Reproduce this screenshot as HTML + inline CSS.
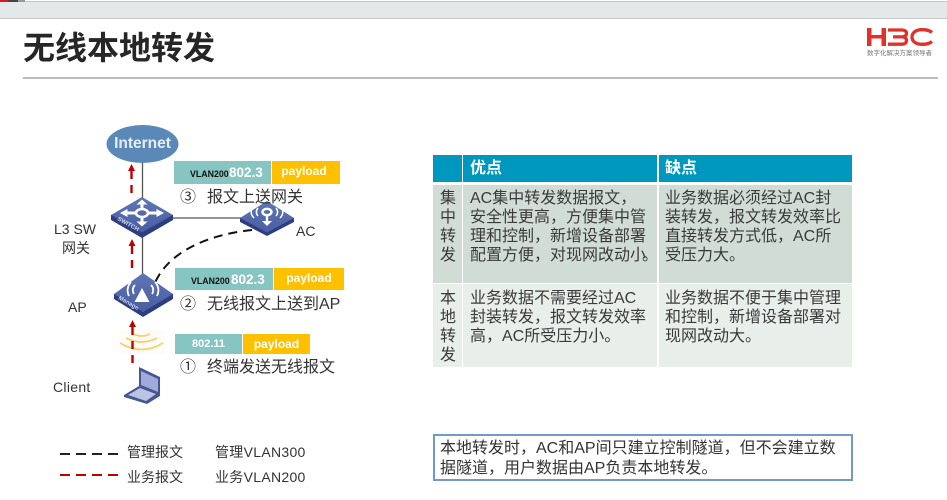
<!DOCTYPE html>
<html lang="zh">
<head>
<meta charset="utf-8">
<style>
html,body{margin:0;padding:0;background:#fff}
#p{position:relative;width:947px;height:500px;overflow:hidden;background:#fff;font-family:"Liberation Sans","Noto Sans CJK SC",sans-serif;color:#333}
.a{position:absolute;white-space:nowrap}
.t{font-size:16px;line-height:19px;color:#3a3a3a}
.l{font-size:14px;line-height:20px;color:#333}
.s{font-size:16px;line-height:20px;color:#333}
.b{position:absolute;box-sizing:border-box}
.w{color:#fff;font-weight:bold;text-align:center}
.n{margin-left:-4px}
</style>
</head>
<body>
<div id="p">
<!-- top strip -->
<div class="b" style="left:0;top:0;width:947px;height:2px;background:#c4c4c4"></div>
<div class="b" style="left:0;top:0;width:8px;height:2px;background:#e0141e"></div>
<div class="b" style="left:8px;top:0;width:10px;height:2px;background:#444"></div>
<div class="b" style="left:18px;top:0;width:7px;height:2px;background:#999"></div>
<div class="b" style="left:25px;top:0;width:922px;height:1px;background:#fff"></div>
<div class="b" style="left:0;top:2px;width:947px;height:16px;background:#e3e8ea"></div>
<div class="b" style="left:0;top:18px;width:947px;height:1px;background:#c8c8c8"></div>

<!-- title -->
<div class="a" style="left:23px;top:29px;font-size:32px;line-height:38px;font-weight:bold;color:#262626">无线本地转发</div>
<div class="b" style="left:23px;top:77px;width:915px;height:2px;background:#bcbcbc"></div>

<!-- logo -->
<svg class="a" style="left:866px;top:27px" width="68" height="20" viewBox="0 0 68 20">
<path d="M1 1h4.500v7h10V1H20v18h-4.500v-7.500h-10V19H1z" fill="#e0322b"/>
<path d="M22 3h14c3 0 4.500 1.300 4.500 3.400S39 9.900 36 9.900H27M36 9.900c3 0 4.500 1.500 4.500 3.600S39 17.200 36 17.200H22" fill="none" stroke="#e0322b" stroke-width="3.300"/>
<path d="M66 5.500C63 3 60 2.700 56 2.700c-6 0-10 2.800-10 7.300s4 7.300 10 7.300c4 0 7-.3 10-2.800" fill="none" stroke="#e0322b" stroke-width="3.300"/>
</svg>
<div class="a" style="left:867px;top:50px;font-size:6.500px;line-height:8px;color:#777">数字化解决方案领导者</div>

<!-- diagram -->
<svg class="a" style="left:0;top:0" width="430" height="500" viewBox="0 0 430 500">
<defs>
<linearGradient id="g1" x1="0" y1="0" x2="0" y2="1"><stop offset="0" stop-color="#5f76b4"/><stop offset="1" stop-color="#4a5ea2"/></linearGradient>
</defs>
<!-- lines -->
<path d="M142.500 160V280" stroke="#555" stroke-width="1.300" fill="none"/>
<path d="M172 218H242" stroke="#555" stroke-width="1.300" fill="none"/>
<path d="M252 230C212 234 168 250 154 285" stroke="#111" stroke-width="2" stroke-dasharray="9 6" fill="none"/>
<!-- red arrows -->
<g stroke="#c00000" stroke-width="2.400" fill="none" stroke-dasharray="8 6">
<path d="M131.500 171V197"/>
<path d="M132 246V272"/>
</g>
<g fill="#c00000">
<path d="M131.500 164l-3.500 7h7z"/>
<path d="M132 239l-3.500 7h7z"/>
<path d="M132.500 320l-3.500 7h7z"/>
</g>
<!-- cloud -->
<ellipse cx="142.500" cy="144" rx="36" ry="19" fill="#5a88b7"/>
<!-- switch -->
<path d="M111 215v5l31 18 31-18v-5z" fill="#2c3d80"/>
<path d="M142 197l31 18-31 17.500-31-17.500z" fill="url(#g1)"/>
<path d="M111 215l31 17.500 31-17.500" fill="none" stroke="#3a4c90" stroke-width=".6"/>
<g fill="none" stroke="#fff" stroke-width="3">
<ellipse cx="142" cy="213" rx="6" ry="4" stroke-width="2.600"/>
<path d="M142 208.500V204M142 217.500V222M135 213h-9M149 213h9"/>
</g>
<g fill="#fff">
<path d="M142 199.500l-5.500 5h11zM142 226.500l-5.500-5h11zM120 213l7.500-4v8zM164 213l-7.500-4v8z"/>
</g>
<text transform="translate(117 220) rotate(29)" font-size="6" font-weight="bold" fill="#d0d6ea" font-family="Liberation Sans">SWITCH</text>
<!-- AC -->
<path d="M240 218v4l27 14 27-14v-4z" fill="#2c3d80"/>
<path d="M267 201l27 17-27 14.500-27-14.500z" fill="url(#g1)"/>
<g fill="none" stroke="#fff" stroke-width="1.500">
<ellipse cx="267" cy="212" rx="4.500" ry="3.200" stroke-width="2.400"/>
<path d="M258 208a9 7 0 0 0 0 8M276 208a9 7 0 0 1 0 8M254 206a14 10 0 0 0 0 12M280 206a14 10 0 0 1 0 12"/>
<path d="M267 215v6" stroke-width="2.400"/>
</g>
<path d="M267 226l-5-5h10z" fill="#fff"/>
<!-- AP -->
<path d="M114 294v5l29 18 30-18v-5z" fill="#2c3d80"/>
<path d="M143 273l30 21-30 18-29-18z" fill="url(#g1)"/>
<g fill="none" stroke="#fff" stroke-width="1.800">
<path d="M135 285a7 7 0 0 0-1 9M151 285a7 7 0 0 1 1 9M131 282a12 12 0 0 0-2 14M155 282a12 12 0 0 1 2 14"/>
</g>
<path d="M142 288l7.500 14h-15z" fill="#fff"/>
<text transform="translate(118 299) rotate(30)" font-size="6" font-weight="bold" fill="#d0d6ea" font-family="Liberation Sans">Manage</text>
<!-- wifi -->
<rect x="120" y="330" width="45" height="24" fill="#fefcf6"/>
<g fill="none" stroke="#f9cf6e" stroke-width="1.800">
<path d="M133 334q9 4 17 0"/>
<path d="M126 338q16 8 31 0"/>
<path d="M120 343q22 13 43 0"/>
</g>
<path d="M132.500 327V365" stroke="#c00000" stroke-width="2.400" stroke-dasharray="8 6" fill="none"/>
<!-- laptop -->
<path d="M139 367l21 10v18l-21-9z" fill="#46578f"/>
<path d="M141 371l17 8v13l-17-7z" fill="#a0abdc"/>
<path d="M124 395l15-9 21 8v2l-13 8-23-7z" fill="#46578f"/>
<path d="M128 395l12-7 16 6-10 7z" fill="#bcc4e4"/>
<!-- legend -->
<path d="M60 454H118" stroke="#222" stroke-width="2" stroke-dasharray="10 6"/>
<path d="M60 475H118" stroke="#c00000" stroke-width="2" stroke-dasharray="10 6"/>
</svg>

<div class="a w" style="left:107px;top:135px;width:71px;font-size:15.500px;line-height:18px;color:#e8eef5">Internet</div>

<!-- bars -->
<div class="b" style="left:174px;top:161px;width:97px;height:23px;background:#87c5c2"></div>
<div class="b" style="left:272px;top:161px;width:68px;height:23px;background:#ffc000"></div>
<div class="a" style="left:190px;top:168px;font-size:8.800px;line-height:12px;font-weight:bold;color:#111">VLAN200</div>
<div class="a w" style="left:229px;top:164px;font-size:13.500px;line-height:17px">802.3</div>
<div class="a w" style="left:271px;top:163px;width:66px;font-size:12px;line-height:16px">payload</div>

<div class="b" style="left:175px;top:268px;width:98px;height:22px;background:#87c5c2"></div>
<div class="b" style="left:274px;top:268px;width:70px;height:22px;background:#ffc000"></div>
<div class="a" style="left:191px;top:275px;font-size:8.800px;line-height:12px;font-weight:bold;color:#111">VLAN200</div>
<div class="a w" style="left:231px;top:271px;font-size:13.500px;line-height:17px">802.3</div>
<div class="a w" style="left:274px;top:270px;width:70px;font-size:12px;line-height:16px">payload</div>

<div class="b" style="left:175px;top:334px;width:67px;height:20px;background:#87c5c2"></div>
<div class="b" style="left:243px;top:334px;width:67px;height:20px;background:#ffc000"></div>
<div class="a w" style="left:175px;top:337px;width:67px;font-size:11px;line-height:14px">802.11</div>
<div class="a w" style="left:243px;top:336px;width:67px;font-size:12px;line-height:16px">payload</div>

<!-- bar captions -->
<div class="a s" style="left:180px;top:188px">③</div>
<div class="a s" style="left:207px;top:188px">报文上送网关</div>
<div class="a s" style="left:180px;top:295px">②</div>
<div class="a s" style="left:207px;top:295px">无线报文上送到AP</div>
<div class="a s" style="left:180px;top:358px">①</div>
<div class="a s" style="left:207px;top:358px">终端发送无线报文</div>

<!-- device labels -->
<div class="a l" style="left:54px;top:219px">L3 SW</div>
<div class="a l" style="left:62px;top:238px">网关</div>
<div class="a l" style="left:68px;top:297px">AP</div>
<div class="a l" style="left:53px;top:377px;letter-spacing:.3px">Client</div>
<div class="a l" style="left:296px;top:221px">AC</div>

<!-- legend text -->
<div class="a l" style="left:127px;top:442px">管理报文</div>
<div class="a l" style="left:215px;top:442px;letter-spacing:.3px">管理VLAN300</div>
<div class="a l" style="left:127px;top:467px">业务报文</div>
<div class="a l" style="left:215px;top:467px;letter-spacing:.3px">业务VLAN200</div>

<!-- table -->
<div class="b" style="left:433px;top:155px;width:29px;height:27px;background:#0097bf"></div>
<div class="b" style="left:463px;top:155px;width:194px;height:27px;background:#0097bf"></div>
<div class="b" style="left:659px;top:155px;width:193px;height:27px;background:#0097bf"></div>
<div class="b" style="left:433px;top:185px;width:29px;height:98px;background:#d2dcd6"></div>
<div class="b" style="left:463px;top:185px;width:194px;height:98px;background:#d2dcd6"></div>
<div class="b" style="left:659px;top:185px;width:193px;height:98px;background:#d2dcd6"></div>
<div class="b" style="left:433px;top:284px;width:29px;height:83px;background:#e8eeea"></div>
<div class="b" style="left:463px;top:284px;width:194px;height:83px;background:#e8eeea"></div>
<div class="b" style="left:659px;top:284px;width:193px;height:83px;background:#e8eeea"></div>

<div class="a" style="left:470px;top:159px;font-size:16px;line-height:20px;font-weight:bold;color:#fff">优点</div>
<div class="a" style="left:665px;top:159px;font-size:16px;line-height:20px;font-weight:bold;color:#fff">缺点</div>

<div class="a t" style="left:440px;top:188.500px">集<br>中<br>转<br>发</div>
<div class="a t" style="left:470px;top:188.500px">AC集中转发数据报文，<br>安全性更高，方便集中管<br>理和控制，新增设备部署<br>配置方便，对现网改动小<span class="n">。</span></div>
<div class="a t" style="left:665px;top:188.500px">业务数据必须经过AC封<br>装转发，报文转发效率比<br>直接转发方式低，AC所<br>受压力大。</div>

<div class="a t" style="left:440px;top:289px">本<br>地<br>转<br>发</div>
<div class="a t" style="left:470px;top:289px">业务数据不需要经过AC<br>封装转发，报文转发效率<br>高，AC所受压力小。</div>
<div class="a t" style="left:665px;top:289px">业务数据不便于集中管理<br>和控制，新增设备部署对<br>现网改动大。</div>

<!-- note box -->
<div class="b" style="left:433px;top:434px;width:420px;height:47px;border:2px solid #6f9ac9;background:#fff"></div>
<div class="a" style="left:440px;top:439px;font-size:16px;line-height:20px;color:#333">本地转发时，AC和AP间只建立控制隧道，但不会建立数<br>据隧道，用户数据由AP负责本地转发。</div>
</div>
</body>
</html>
